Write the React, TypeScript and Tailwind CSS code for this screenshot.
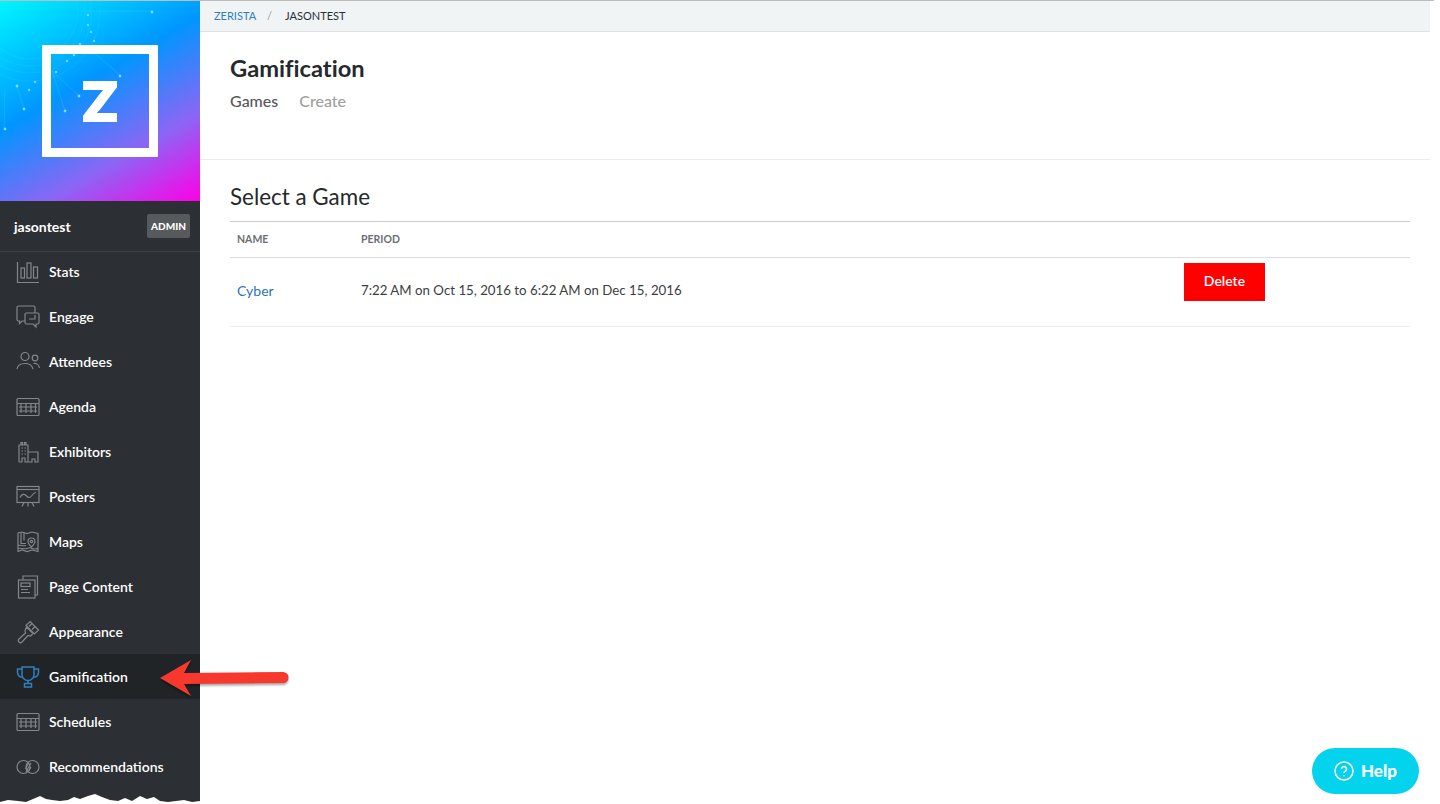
import type { ReactNode } from "react";

function Icon({ children, active }: { children: ReactNode; active?: boolean }) {
  return (
    <svg
      viewBox="0 0 24 24"
      fill="none"
      stroke={active ? "#2f80c2" : "#83878a"}
      strokeWidth="1.2"
      className="w-6 h-6 shrink-0"
    >
      {children}
    </svg>
  );
}

const grid = (
  <>
    <rect x="1" y="3.500" width="22" height="17" rx="1" />
    <path d="M1 8.500h22M3 12h18M3 16h18M5 8.500V18M10 8.500V18M15 8.500V18M19.500 8.500V18" />
  </>
);

const menu: { label: string; active?: boolean; icon: ReactNode }[] = [
  {
    label: "Stats",
    icon: (
      <>
        <path d="M1.500 2v20.500H23" />
        <rect x="5" y="8" width="3.500" height="10" />
        <rect x="11" y="3" width="4" height="15" />
        <rect x="17.500" y="7" width="4" height="11" />
      </>
    ),
  },
  {
    label: "Engage",
    icon: (
      <>
        <path d="M9 16H6l-2.500 2.500V16H2.500A1.500 1.500 0 0 1 1 14.500v-12A1.500 1.500 0 0 1 2.500 1h15A1.500 1.500 0 0 1 19 2.500V8" />
        <path d="M10.500 8h11A1.500 1.500 0 0 1 23 9.500v8a1.500 1.500 0 0 1-1.500 1.500H20v3l-3-3h-6.500A1.500 1.500 0 0 1 9 17.500v-8A1.500 1.500 0 0 1 10.500 8z" />
        <path d="M13 14h6v-4" />
      </>
    ),
  },
  {
    label: "Attendees",
    icon: (
      <>
        <circle cx="9" cy="6.500" r="4" />
        <circle cx="19" cy="8" r="2.800" />
        <path d="M1 19c.5-4 4-5.500 8-5.500s7 1.500 8 5.500" />
        <path d="M17.500 13.500c3-.5 5.500 1.500 6 4.500" />
      </>
    ),
  },
  { label: "Agenda", icon: grid },
  {
    label: "Exhibitors",
    icon: (
      <>
        <path d="M3 22V5h9v17M3 22h3v-4h3v4h3M5 5V2.500h1.500V5M8.500 5V2.500H10V5" />
        <path d="M12 12h10v10h-3v-3h-3v3h-4" />
        <path d="M5.500 8h1.500M8.500 8H10M5.500 11h1.500M8.500 11H10M5.500 14h1.500M8.500 14H10" />
      </>
    ),
  },
  {
    label: "Posters",
    icon: (
      <>
        <rect x="1" y="1.500" width="22" height="16" />
        <path d="M1 4.500h22" />
        <path d="M4 12.500c2-3.500 4-4 6-2s3.500 3 5.500.5 3-3.500 4.500-3.500" />
        <path d="M8 17.500l-2 4M12 17.500v4M16 17.500l2 4" />
      </>
    ),
  },
  {
    label: "Maps",
    icon: (
      <>
        <path d="M2 3l4-1 5 1.500 5-1.500 6 1.500v18l-6-1.500-5 1.500-5-1.500-4 1.500z" />
        <path d="M5 2.500v11h5M8 2.500v8M2 15.500c3-1 5 1 8 0M2 18.500c3-1 6 1 9 0s3-1 5 0 4 .5 6 0" />
        <path d="M15.500 17c-2-2-3.500-3.500-3.500-5.500a3.500 3.500 0 0 1 7 0c0 2-1.500 3.500-3.500 5.500z" />
        <circle cx="15.500" cy="11.500" r="1.200" />
      </>
    ),
  },
  {
    label: "Page Content",
    icon: (
      <>
        <path d="M7 4.500V1h14.500v19H19" />
        <rect x="2.500" y="5" width="16.500" height="18" />
        <rect x="5" y="8" width="9" height="3.500" />
        <path d="M5 14.500h7M5 17.500h9" />
      </>
    ),
  },
  {
    label: "Appearance",
    icon: (
      <>
        <path d="M14 1.500l8.500 8.500-4 4-8.500-8.500z" />
        <path d="M16 3.500l-3 3M19 6.500l-3 3" />
        <path d="M10.500 7l6.500 6.500-2.500 2.500-2.500-.5-6 6.500a1.800 1.800 0 0 1-3-3l6.500-6-.5-2.500z" />
      </>
    ),
  },
  {
    label: "Gamification",
    active: true,
    icon: (
      <>
        <path d="M6 2h12v7.500a6 6 0 0 1-12 0z" strokeWidth="1.500" />
        <path d="M6 4H1.500v3c0 3 2 5 5 5.500M18 4h4.500v3c0 3-2 5-5 5.500" strokeWidth="1.500" />
        <path d="M12 15.500v3M8.500 22v-3.500h7V22z" strokeWidth="1.500" />
      </>
    ),
  },
  { label: "Schedules", icon: grid },
  {
    label: "Recommendations",
    icon: (
      <>
        <circle cx="7.500" cy="12" r="6.500" />
        <circle cx="16.500" cy="12" r="6.500" />
        <path d="M10 17l5-9M9.500 14l3-6M12 17l3-5" />
      </>
    ),
  },
];

function Logo() {
  return (
    <div className="relative h-[200px] overflow-hidden bg-[linear-gradient(150deg,#00f6ff_0%,#0096ff_41%,#8b66f5_72%,#ff00e6_100%)]">
      <svg viewBox="0 0 200 200" className="absolute inset-0 w-full h-full" fill="#7fe6ff" stroke="#6fdcff" strokeWidth="0.4">
        <g fill="none" opacity="0.3">
          <circle cx="30" cy="10" r="48" />
          <circle cx="30" cy="10" r="55" />
          <circle cx="30" cy="10" r="62" />
          <circle cx="30" cy="10" r="70" />
        </g>
        <path d="M80 10h72M92 50l28 24M52 70l27 25M52 70l13 40M17 85l7 23M4 128l1-40" fill="none" opacity="0.5" />
        <circle cx="152" cy="11" r="1.200" />
        <circle cx="88" cy="14" r="1" />
        <circle cx="88" cy="24" r="1" />
        <circle cx="91" cy="31" r="1" />
        <circle cx="94" cy="40" r="1" />
        <circle cx="80" cy="43" r="1" />
        <circle cx="74" cy="54" r="1" />
        <circle cx="67" cy="60" r="1" />
        <circle cx="56" cy="71" r="1" />
        <circle cx="120" cy="75" r="1.200" />
        <circle cx="79" cy="95" r="1.200" />
        <circle cx="65" cy="110" r="1.200" />
        <circle cx="24" cy="108" r="1.200" />
        <circle cx="17" cy="85" r="1.200" />
        <circle cx="29" cy="89" r="1" />
        <circle cx="35" cy="81" r="1" />
        <circle cx="5" cy="128" r="1.200" />
      </svg>
      <div className="absolute left-[42px] top-[44px] w-[116px] h-[112px] border-[9px] border-white rounded-[1px] flex items-center justify-center">
        <span className="text-white text-[57px] leading-none font-black font-['Inter',sans-serif]">Z</span>
      </div>
    </div>
  );
}

function Sidebar() {
  return (
    <aside className="relative w-[200px] shrink-0 bg-[#2c3034] overflow-hidden">
      <Logo />
      <div className="h-[51px] border-b border-[#3d4145] flex items-center justify-between pl-[14px] pr-[10px]">
        <span className="text-white text-[14px] font-bold">jasontest</span>
        <span className="w-[43px] h-6 rounded-[2px] bg-[#575a5d] text-white text-[10px] font-black flex items-center justify-center">
          ADMIN
        </span>
      </div>
      <ul className="-mt-[3px]">
        {menu.map((item) => (
          <li
            key={item.label}
            className={
              item.active
                ? "h-[45px] flex items-center gap-[9px] pl-4 bg-[#212426]"
                : "h-[45px] flex items-center gap-[9px] pl-4"
            }
          >
            <Icon active={item.active}>{item.icon}</Icon>
            <span className="text-white text-[14px] font-semibold">{item.label}</span>
          </li>
        ))}
      </ul>
      {/* torn bottom edge */}
      <svg viewBox="0 0 200 12" preserveAspectRatio="none" className="absolute left-0 bottom-0 w-[200px] h-3" fill="#fff">
        <polygon points="0,12 0,10 8,8 18,9 26,10 33,7 40,4 46,7 52,8 60,9 68,8 74,5 80,7 88,4 95,2 102,5 110,8 118,9 125,6 132,9 140,4 147,7 154,5 160,9 168,10 176,9 184,8 192,10 200,9 200,12" />
      </svg>
    </aside>
  );
}

function Main() {
  return (
    <main className="w-[1230px] shrink-0">
      <div className="h-[31px] bg-[#f0f4f5] border-b border-[#dfe2e4] flex items-center pl-[14px] text-[11px]">
        <span className="text-[#2f80c2]">ZERISTA</span>
        <span className="text-[#9a9a9a] ml-[11px]">/</span>
        <span className="text-[#2b2f33] ml-[13px]">JASONTEST</span>
      </div>
      <header className="h-[128px] border-b border-[#ececec] pl-[30px] pt-[21px]">
        <h1 className="text-[23.700px] leading-[30px] font-bold text-[#26292c] [font-variant-ligatures:none]">Gamification</h1>
        <nav className="flex gap-[21px] mt-2 text-[16px] leading-[20px]">
          <span className="text-[#54575a] font-medium">Games</span>
          <span className="text-[#a0a0a0] font-medium">Create</span>
        </nav>
      </header>
      <section className="pl-[30px] pr-5">
        <h2 className="text-[22.400px] leading-7 text-[#26292c] mt-[23px] pb-[10px] border-b border-[#cccccc]">Select a Game</h2>
        <div className="grid grid-cols-[131px_823px_1fr] h-9 items-center border-b border-[#dddddd] text-[10.500px] font-bold text-[#6c6f72]">
          <span className="pl-[7px]">NAME</span>
          <span>PERIOD</span>
          <span />
        </div>
        <div className="grid grid-cols-[131px_823px_1fr] h-[69px] border-b border-[#ececec] text-[#3b3e41]">
          <a className="pl-[7px] pb-[3px] self-center text-[14px] text-[#2f74b8]">Cyber</a>
          <span className="pb-[2px] self-center text-[13.280px]">7:22 AM on Oct 15, 2016 to 6:22 AM on Dec 15, 2016</span>
          <div className="pt-[5px]">
            <button className="w-[81px] h-[38px] pb-[3px] bg-[#ff0000] text-white text-[14px] font-semibold">Delete</button>
          </div>
        </div>
      </section>
    </main>
  );
}

export default function App() {
  return (
    <div className="relative w-[1440px] h-[804px] overflow-hidden bg-white font-['Lato','Noto_Sans',sans-serif]">
      <div className="h-px w-[1434px] bg-[#bdbdbd]" />
      <div className="flex h-[803px]">
        <Sidebar />
        <Main />
      </div>
      {/* annotation arrow */}
      <svg viewBox="0 0 140 50" className="absolute left-[155px] top-[655px] w-[140px] h-[50px] drop-shadow-[0_2px_1px_rgba(0,0,0,0.35)]">
        <path d="M5 23L36 5l-7 13 99-1a5.500 5.500 0 0 1 0 11l-99 1 7 12z" fill="#f7382f" />
      </svg>
      <button className="absolute left-[1312px] top-[748px] w-[107px] h-[46px] rounded-[23px] bg-[#04d3ee] text-white flex items-center justify-center gap-[7px] text-[17px] font-black">
        <svg viewBox="0 0 20 20" className="w-5 h-5" fill="none" stroke="#fff" strokeWidth="1.500">
          <circle cx="10" cy="10" r="9" />
          <path d="M7.500 8a2.500 2.500 0 1 1 3.800 2.100c-.9.600-1.300 1-1.300 2" />
          <path d="M10 14v1.300" />
        </svg>
        Help
      </button>
    </div>
  );
}
